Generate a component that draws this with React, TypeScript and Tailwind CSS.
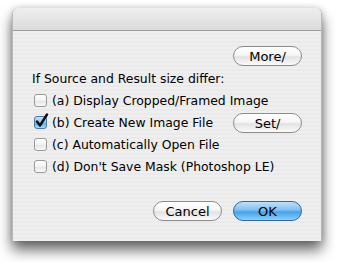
import React from "react";

function AquaButton({ label, primary = false }: { label: string; primary?: boolean }) {
  return (
    <div
      className={
        primary
          ? "relative w-[69px] h-[20px] rounded-full border border-[#3a6893] bg-[linear-gradient(to_bottom,#bfe0fa_0%,#7fbff2_45%,#45a2ea_55%,#88d0fb_100%)] flex items-center justify-center text-[13px] text-black leading-none"
          : "relative w-[69px] h-[20px] rounded-full border border-[#8d8d8d] bg-[linear-gradient(to_bottom,#ffffff_0%,#f6f6f6_45%,#e2e2e2_55%,#fbfbfb_100%)] flex items-center justify-center text-[13px] text-black leading-none"
      }
    >
      {label}
    </div>
  );
}

function Check({ checked = false }: { checked?: boolean }) {
  return (
    <div className="relative w-[13px] h-[13px] shrink-0">
      <div
        className={
          checked
            ? "absolute inset-0 rounded-[3px] border border-[#4b7aa8] bg-[linear-gradient(to_bottom,#c9e4fb_0%,#86c2f2_50%,#5caeec_55%,#a7dafb_100%)]"
            : "absolute inset-0 rounded-[3px] border border-[#9a9a9a] bg-[linear-gradient(to_bottom,#ffffff_0%,#f2f2f2_50%,#e4e4e4_55%,#fafafa_100%)]"
        }
      />
      {checked && (
        <svg className="absolute left-[1px] top-[-3px]" width="14" height="15" viewBox="0 0 14 15">
          <path d="M2 8.5 L5 12.5 L12 1.5" fill="none" stroke="#111" strokeWidth="2.4" strokeLinecap="round" strokeLinejoin="round" />
        </svg>
      )}
    </div>
  );
}

function Row({ label, checked = false, children }: { label: string; checked?: boolean; children?: React.ReactNode }) {
  return (
    <div className="h-[22px] flex items-center">
      <div className="pl-[2px] flex items-center gap-[5px] flex-1">
        <Check checked={checked} />
        <span className="text-[12.4px] text-black">{label}</span>
      </div>
      {children}
    </div>
  );
}

export default function App() {
  return (
    <div
      className="w-[337px] h-[262px] bg-white pt-[8px] pl-[12px] overflow-hidden"
      style={{ fontFamily: '"DejaVu Sans", "Liberation Sans", sans-serif' }}
    >
      <div className="w-[310px] h-[233px] rounded-t-[6px] flex flex-col overflow-hidden shadow-[0_9px_14px_rgba(0,0,0,0.6),0_0_6px_rgba(0,0,0,0.18)] border-x border-[#b8b8b8]">
        <div className="h-[23px] shrink-0 bg-[linear-gradient(to_bottom,#eeeeee_0%,#dcdcdc_100%)] border-b border-[#9b9b9b]" />
        <div className="flex-1 px-[19px] bg-[repeating-linear-gradient(to_bottom,#efefef_0px,#efefef_2px,#eaeaea_2px,#eaeaea_4px)] flex flex-col">
          <div className="mt-[15px] flex justify-end">
            <AquaButton label="More/" />
          </div>
          <div className="mt-[5px] h-[16px] flex items-center text-[12.4px] text-black">If Source and Result size differ:</div>
          <div className="mt-[3px] flex flex-col">
            <Row label="(a) Display Cropped/Framed Image" />
            <Row label="(b) Create New Image File" checked>
              <AquaButton label="Set/" />
            </Row>
            <Row label="(c) Automatically Open File" />
            <Row label="(d) Don't Save Mask (Photoshop LE)" />
          </div>
          <div className="mt-[23px] flex justify-end gap-[11px]">
            <AquaButton label="Cancel" />
            <AquaButton label="OK" primary />
          </div>
        </div>
      </div>
    </div>
  );
}
